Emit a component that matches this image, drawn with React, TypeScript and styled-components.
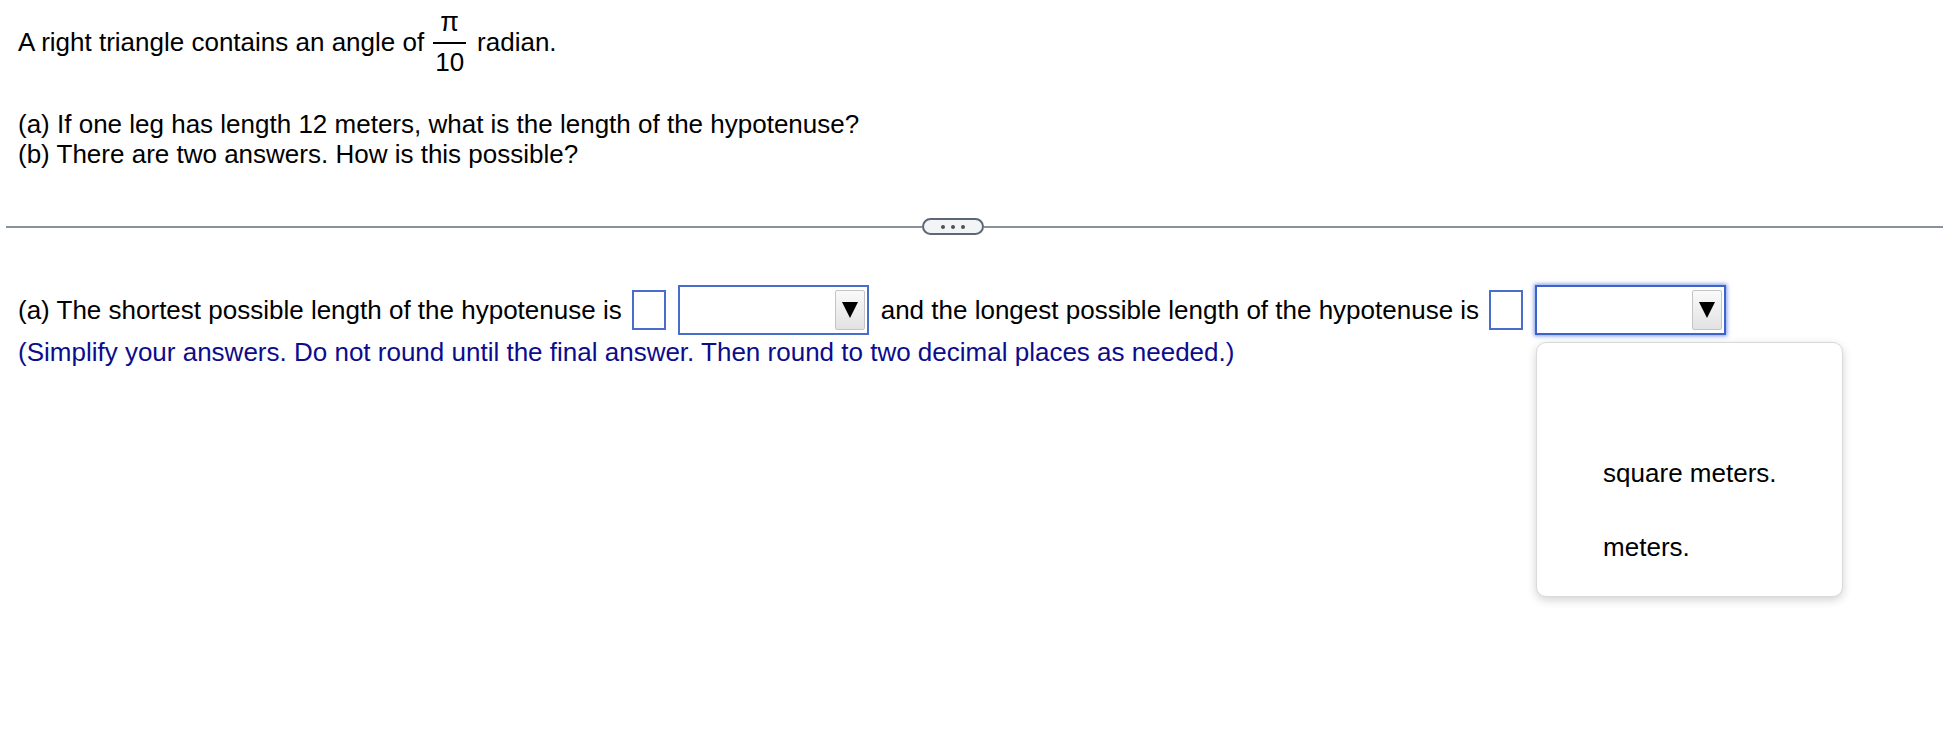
import styled, { createGlobalStyle } from "styled-components";

const GlobalStyle = createGlobalStyle`
  html, body {
    margin: 0;
    padding: 0;
    background: #ffffff;
  }
  body {
    font-family: "Liberation Sans", Arial, Helvetica, sans-serif;
    font-size: 26px;
    line-height: 30px;
    color: #000000;
  }
`;

const Page = styled.div`
  box-sizing: border-box;
  min-height: 739px;
  padding-top: 7px;
`;

const Question = styled.div`
  padding-left: 18px;
`;

const Stem = styled.div`
  display: flex;
  align-items: center;
  height: 70px;
`;

const Frac = styled.span`
  display: inline-flex;
  flex-direction: column;
  align-items: center;
  margin: 0 11px 0 9px;
`;

const Num = styled.span`
  display: block;
  height: 30px;
  font-size: 27px;
`;

const Bar = styled.span`
  display: block;
  align-self: stretch;
  height: 2px;
  margin: 5px 0 3px;
  background: #000;
`;

const Den = styled.span`
  display: block;
  height: 30px;
  padding: 0 2px;
`;

const Parts = styled.div`
  margin-top: 32px;
`;

const Line = styled.p`
  margin: 0;
  height: 30px;
`;

const Divider = styled.div`
  display: flex;
  align-items: center;
  height: 17px;
  margin: 49px 0 0 6px;
`;

const Rule = styled.div<{ $grow?: boolean }>`
  height: 2px;
  background: #8a929e;
  flex: ${(p) => (p.$grow ? "1" : "0 0 916px")};
`;

const Pill = styled.div`
  box-sizing: border-box;
  width: 62px;
  height: 17px;
  border: 2px solid #5d6875;
  border-radius: 9px;
  background: #f3f4f6;
  display: flex;
  align-items: center;
  justify-content: center;
  gap: 6px;
`;

const Dot = styled.span`
  width: 4px;
  height: 4px;
  border-radius: 50%;
  background: #4a5159;
`;

const Answer = styled.div`
  padding-left: 18px;
  margin-top: 50px;
`;

const Row = styled.div`
  display: flex;
  align-items: center;
  height: 50px;
`;

const Blank = styled.span`
  box-sizing: border-box;
  width: 34px;
  height: 40px;
  border: 2px solid #4a6dca;
  background: #fff;
  margin: 0 12px 0 10px;
`;

const SelectWrap = styled.span`
  position: relative;
  margin-right: 12px;
`;

const Select = styled.span<{ $focused?: boolean }>`
  box-sizing: border-box;
  display: flex;
  justify-content: flex-end;
  align-items: center;
  width: 191px;
  height: 50px;
  padding: 0 2px;
  border: 2px solid ${(p) => (p.$focused ? "#3d63c8" : "#4a6dca")};
  box-shadow: ${(p) => (p.$focused ? "0 0 4px 1px rgba(70, 110, 220, 0.7)" : "none")};
  background: #fff;
`;

const Arrow = styled.span`
  box-sizing: border-box;
  width: 30px;
  height: 40px;
  border: 1px solid #c4c4c4;
  border-radius: 2px;
  background: linear-gradient(#fafafa, #e2e2e2);
  display: flex;
  align-items: center;
  justify-content: center;
`;

const Hint = styled.p`
  margin: 2px 0 0;
  color: #0c0c8c;
`;

const Menu = styled.div`
  position: absolute;
  left: 1px;
  top: 57px;
  box-sizing: border-box;
  width: 307px;
  height: 255px;
  padding-top: 19px;
  border: 1px solid #d9d9d9;
  border-radius: 10px;
  background: #fff;
  box-shadow: 0 3px 10px rgba(0, 0, 0, 0.18);
  z-index: 2;
`;

const Option = styled.div`
  height: 74px;
  display: flex;
  align-items: center;
  padding-left: 66px;
  white-space: nowrap;
`;

function Triangle() {
  return (
    <svg width="16" height="18" viewBox="0 0 16 18">
      <polygon points="0,1 16,1 8,17" fill="#000" />
    </svg>
  );
}

function Dropdown({ focused, open }: { focused?: boolean; open?: boolean }) {
  return (
    <SelectWrap>
      <Select $focused={focused}>
        <Arrow>
          <Triangle />
        </Arrow>
      </Select>
      {open && (
        <Menu>
          <Option>{"\u00a0"}</Option>
          <Option>square meters.</Option>
          <Option>meters.</Option>
        </Menu>
      )}
    </SelectWrap>
  );
}

export default function App() {
  return (
    <Page>
      <GlobalStyle />
      <Question>
        <Stem>
          <span>A right triangle contains an angle of</span>
          <Frac>
            <Num>π</Num>
            <Bar />
            <Den>10</Den>
          </Frac>
          <span>radian.</span>
        </Stem>
        <Parts>
          <Line>(a) If one leg has length 12 meters, what is the length of the hypotenuse?</Line>
          <Line>(b) There are two answers. How is this possible?</Line>
        </Parts>
      </Question>
      <Divider>
        <Rule />
        <Pill>
          <Dot />
          <Dot />
          <Dot />
        </Pill>
        <Rule $grow />
      </Divider>
      <Answer>
        <Row>
          <span>(a) The shortest possible length of the hypotenuse is</span>
          <Blank />
          <Dropdown />
          <span>and the longest possible length of the hypotenuse is</span>
          <Blank />
          <Dropdown focused open />
        </Row>
        <Hint>
          (Simplify your answers. Do not round until the final answer. Then round to two decimal places as needed.)
        </Hint>
      </Answer>
    </Page>
  );
}
